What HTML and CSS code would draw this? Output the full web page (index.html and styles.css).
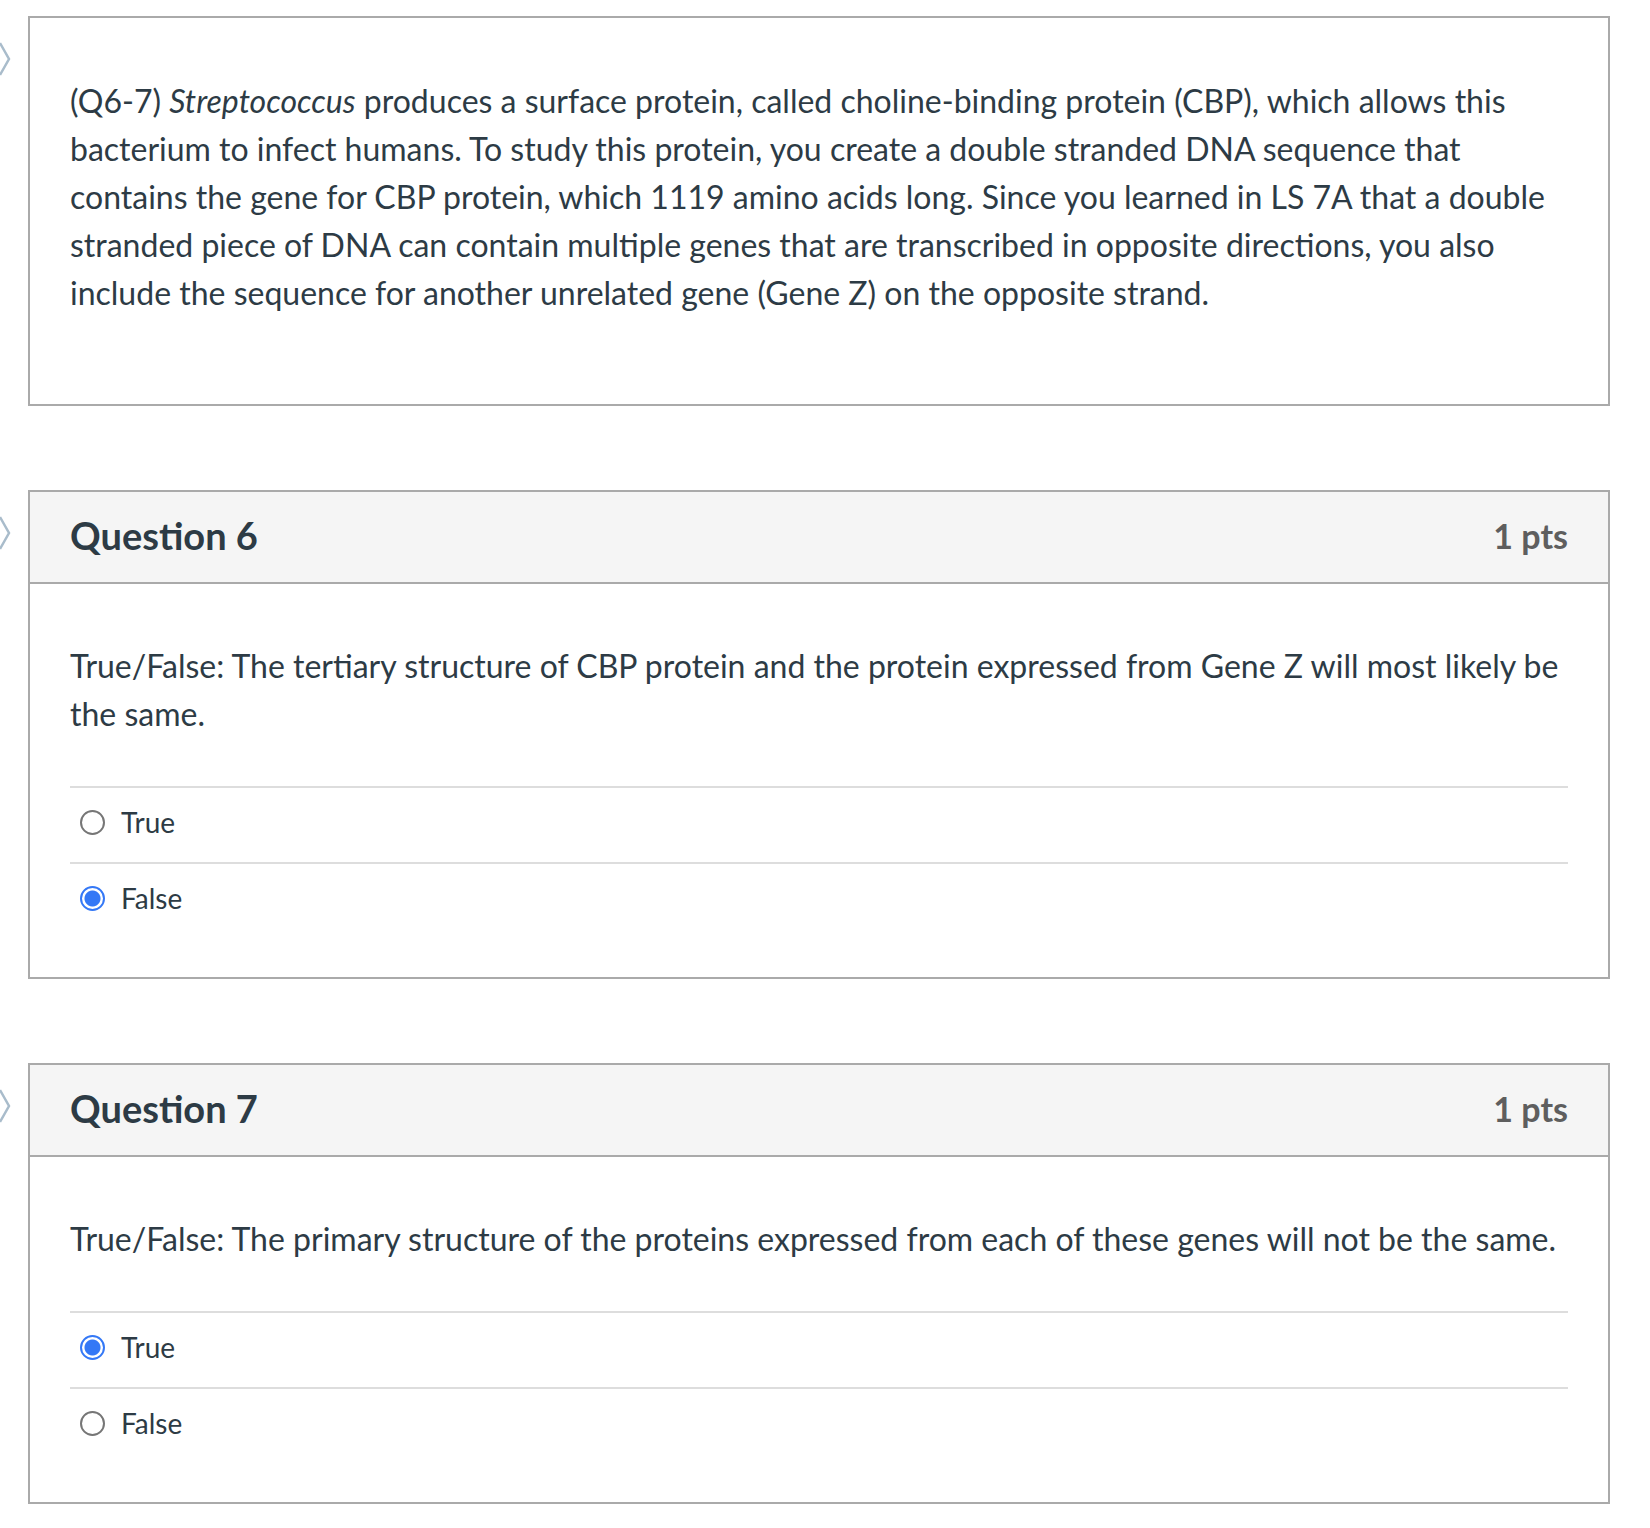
FILE: index.html
```html
<!DOCTYPE html>
<html lang="en">
<head>
<meta charset="utf-8">
<title>Quiz</title>
<link rel="stylesheet" href="styles.css">
</head>
<body>
<div class="quiz">
  <div class="item">
    <svg class="chev" width="14" height="34" viewBox="0 0 14 34"><polyline points="0,1 9,17 0,33" fill="none" stroke="#a9bccb" stroke-width="2.5"/></svg>
    <div class="card">
      <div class="text-body">
        <p>(Q6-7) <em>Streptococcus</em> produces a surface protein, called choline-binding protein (CBP), which allows this bacterium to infect humans. To study this protein, you create a double stranded DNA sequence that contains the gene for CBP protein, which 1119 amino acids long. Since you learned in LS 7A that a double stranded piece of DNA can contain multiple genes that are transcribed in opposite directions, you also include the sequence for another unrelated gene (Gene Z) on the opposite strand.</p>
      </div>
    </div>
  </div>

  <div class="item">
    <svg class="chev" width="14" height="34" viewBox="0 0 14 34"><polyline points="0,1 9,17 0,33" fill="none" stroke="#a9bccb" stroke-width="2.5"/></svg>
    <div class="card">
      <div class="header">
        <span class="title">Question 6</span>
        <span class="pts">1 pts</span>
      </div>
      <div class="q-body">
        <p class="q-text">True/False: The tertiary structure of CBP protein and the protein expressed from Gene Z will most likely be the same.</p>
        <div class="answers">
          <label class="answer"><span class="radio"></span><span class="label">True</span></label>
          <label class="answer"><span class="radio checked"></span><span class="label">False</span></label>
        </div>
      </div>
    </div>
  </div>

  <div class="item">
    <svg class="chev" width="14" height="34" viewBox="0 0 14 34"><polyline points="0,1 9,17 0,33" fill="none" stroke="#a9bccb" stroke-width="2.5"/></svg>
    <div class="card">
      <div class="header">
        <span class="title">Question 7</span>
        <span class="pts">1 pts</span>
      </div>
      <div class="q-body">
        <p class="q-text">True/False: The primary structure of the proteins expressed from each of these genes will not be the same.</p>
        <div class="answers">
          <label class="answer"><span class="radio checked"></span><span class="label">True</span></label>
          <label class="answer"><span class="radio"></span><span class="label">False</span></label>
        </div>
      </div>
    </div>
  </div>
</div>
</body>
</html>
```

FILE: styles.css
```css
html, body {
  margin: 0;
  padding: 0;
  background: #ffffff;
}
body {
  font-family: Lato, "Open Sans", "Liberation Sans", sans-serif;
  color: #2d3b45;
}
.quiz {
  padding: 16px 0 0 28px;
  width: 1582px;
  display: flex;
  flex-direction: column;
  gap: 84px;
}
.item {
  position: relative;
}
.chev {
  position: absolute;
  left: -28px;
  top: 26px;
}
.card {
  border: 2px solid #aaaaaa;
  background: #fff;
}
.text-body {
  padding: 59px 40px 87px 40px;
}
.text-body p, .q-text {
  margin: 0;
  font-size: 32px;
  line-height: 48px;
}
.header {
  background: #f5f5f5;
  border-bottom: 2px solid #aaaaaa;
  height: 86px;
  padding: 0 40px 4px 40px;
  display: flex;
  align-items: center;
  justify-content: space-between;
}
.title {
  font-size: 38px;
  font-weight: 700;
  color: #2d3b45;
}
.pts {
  font-size: 34px;
  font-weight: 700;
  color: #5e5e5e;
}
.q-body {
  padding: 58px 40px 39px 40px;
}
.answers {
  margin-top: 48px;
}
.answer {
  display: flex;
  align-items: center;
  box-sizing: border-box;
  height: 76px;
  padding-bottom: 6px;
  border-top: 2px solid #dddddd;
  gap: 16px;
  padding-left: 10px;
}
.radio {
  box-sizing: border-box;
  width: 25px;
  height: 25px;
  border-radius: 50%;
  border: 2px solid #767676;
  background: #fff;
  flex: none;
}
.radio.checked {
  border: 2px solid #3478f6;
  background: radial-gradient(circle, #3478f6 0 7.5px, #fff 8.5px);
}
.label {
  font-size: 28px;
  color: #2d3b45;
}
```
